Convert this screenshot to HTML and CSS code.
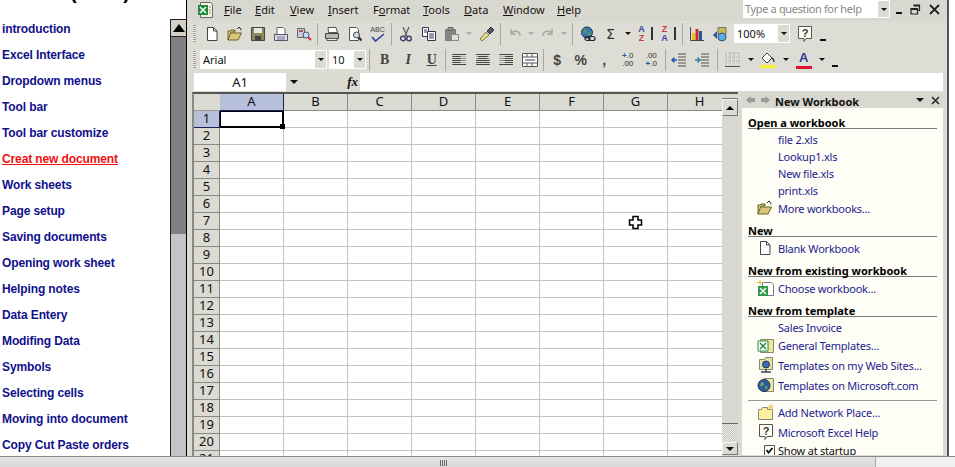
FILE: index.html
```html
<!DOCTYPE html>
<html lang="en">
<head>
    <meta charset="UTF-8">
    <title>Excel lessons</title>
    <link rel="stylesheet" href="styles.css">
</head>
<body>

<svg class="sprites" width="0" height="0">
    <symbol id="i-new" viewBox="0 0 16 16"><path d="M3.5 1.5h6l3.5 3.5v9.500h-9.500z" fill="#fff" stroke="#444"/><path d="M9.500 1.500v3.500h3.500" fill="none" stroke="#444"/></symbol>
    <symbol id="i-open" viewBox="0 0 16 16"><path d="M1 14V5h2l1-1h4v2H4L1 14h10l3.500-7H4" fill="#d8c878" stroke="#6b6428"/><path d="M10 3l2-2 2 2M12 1.500c1.500.5 2 1.500 2 3" fill="none" stroke="#333"/></symbol>
    <symbol id="i-save" viewBox="0 0 16 16"><path d="M1.500 1.500h13v13h-13z" fill="#8a8a58" stroke="#444"/><path d="M4 2h8v5H4z" fill="#e8e8e0"/><path d="M5 10h6v4.500H5z" fill="#444"/></symbol>
    <symbol id="i-perm" viewBox="0 0 16 16"><path d="M4 1.500h6l2 2v5H4z" fill="#fff" stroke="#667"/><path d="M1.500 8.500h13v6h-13z" fill="#dde" stroke="#556"/><path d="M4 11h8M4 13h8" stroke="#778"/></symbol>
    <symbol id="i-search" viewBox="0 0 16 16"><path d="M1.500 2.500h7v9h-7z" fill="#ccd" stroke="#666"/><path d="M3 4h4v2H3z" fill="#a55"/><circle cx="10" cy="9" r="3" fill="#bdf" stroke="#555"/><path d="M12 11l3 3" stroke="#c33" stroke-width="2"/></symbol>
    <symbol id="i-print" viewBox="0 0 16 16"><path d="M4 1.500h8l1.500 5h-9z" fill="#fff" stroke="#555"/><path d="M1.500 7.500h13v5h-13z" fill="#b8b8b0" stroke="#444"/><path d="M3 12.500h10v2H3z" fill="#eee" stroke="#555"/></symbol>
    <symbol id="i-preview" viewBox="0 0 16 16"><path d="M2.500 1.500h7l2 2v11h-9z" fill="#fff" stroke="#555"/><circle cx="9.500" cy="9" r="3" fill="#cde" stroke="#444"/><path d="M11.500 11l3 3.500" stroke="#333" stroke-width="2"/></symbol>
    <symbol id="i-copy" viewBox="0 0 16 16"><path d="M1.500 1.500h6v9h-6z" fill="#fff" stroke="#335"/><path d="M6.500 5.500h8v9h-8z" fill="#fff" stroke="#335"/><path d="M8 8h5M8 10h5M8 12h5M3 4h3M3 6h3" stroke="#335"/></symbol>
    <symbol id="i-cut" viewBox="0 0 16 16"><path d="M5 1l4 9M11 1L7 10" stroke="#555" stroke-width="1.200" fill="none"/><circle cx="5" cy="12.500" r="2.300" fill="none" stroke="#336" stroke-width="1.300"/><circle cx="11" cy="12.500" r="2.300" fill="none" stroke="#336" stroke-width="1.300"/></symbol>
    <symbol id="i-paste" viewBox="0 0 16 16"><path d="M1.500 3.500h10v11h-10z" fill="#888880" stroke="#777"/><path d="M4 1.500h5v3H4z" fill="#999" stroke="#666"/><path d="M7.500 8.500h7v6h-7z" fill="#ddd" stroke="#888"/></symbol>
    <symbol id="i-painter" viewBox="0 0 16 16"><path d="M1 13l6-7 3 3-7 6z" fill="#f0e070" stroke="#776"/><path d="M8 5l4-4 3 3-4 4z" fill="#556" stroke="#334"/></symbol>
    <symbol id="i-undo" viewBox="0 0 16 16"><path d="M4 3v5h5M4 8c2-4 9-4 9 2" fill="none" stroke="#a8a8a0" stroke-width="1.500"/></symbol>
    <symbol id="i-redo" viewBox="0 0 16 16"><path d="M12 3v5H7M12 8c-2-4-9-4-9 2" fill="none" stroke="#a8a8a0" stroke-width="1.500"/></symbol>
    <symbol id="i-link" viewBox="0 0 16 16"><circle cx="7" cy="6.500" r="5.500" fill="#3c78b8" stroke="#235"/><path d="M4 3l3 1-1 3-3 0zM8 6l3 1-1 3-2-1z" fill="#5a9a50"/><rect x="5" y="10.500" width="5" height="4" rx="2" fill="none" stroke="#223" stroke-width="1.200"/><rect x="9" y="10.500" width="6" height="4" rx="2" fill="none" stroke="#223" stroke-width="1.200"/></symbol>
    <symbol id="i-chart" viewBox="0 0 16 16"><path d="M1.500 1v13.500H15" fill="none" stroke="#444"/><path d="M3 7h3v7H3z" fill="#e8c020"/><path d="M6.500 3h3v11h-3z" fill="#c03030"/><path d="M10 5h3v9h-3z" fill="#3050a0"/></symbol>
    <symbol id="i-draw" viewBox="0 0 16 16"><path d="M6 1.500h8v7H6z" fill="#c8b850" stroke="#776"/><path d="M1 9l4-4v8z" fill="#3050a0"/><circle cx="10" cy="11" r="4" fill="#5ab0e0" stroke="#357"/></symbol>
    <symbol id="i-help" viewBox="0 0 18 18"><path d="M2.500 1.500h13v12H10l-2 3v-3H2.500z" fill="#fdfdee" stroke="#555"/><text x="9" y="11.500" font-family="Liberation Sans" font-size="11" font-weight="bold" text-anchor="middle" fill="#335">?</text></symbol>
    <symbol id="i-xl" viewBox="0 0 18 18"><path d="M3.500 1.500h10l2 2v13h-12z" fill="#f4f4e0" stroke="#667"/><path d="M1 4h10v10H1z" fill="#1f8a3c"/><path d="M3 6l6 6M9 6l-6 6" stroke="#fff" stroke-width="1.500"/><path d="M12 6h2M12 9h2M12 12h2" stroke="#6a9a6a"/></symbol>
    <symbol id="i-tpl" viewBox="0 0 18 18"><path d="M3.500 2.500h13v13h-13z" fill="#eee8a0" stroke="#887"/><path d="M1 4h10v10H1z" fill="#fff" stroke="#1f8a3c"/><path d="M3 6l6 6M9 6l-6 6" stroke="#1f8a3c" stroke-width="1.500"/></symbol>
    <symbol id="i-web" viewBox="0 0 18 18"><path d="M2.500 3.500h5l1-2h7v12h-13z" fill="#e8e4a8" stroke="#887"/><circle cx="9" cy="8.500" r="3.500" fill="#3c68b0" stroke="#235"/><path d="M4 16h10M9 13v3" stroke="#445" stroke-width="1.500"/></symbol>
    <symbol id="i-globe" viewBox="0 0 18 18"><path d="M7 2.500h9.500v13H7z" fill="#eee8a0" stroke="#887"/><circle cx="7" cy="9.500" r="6" fill="#2f5c9c" stroke="#234"/><path d="M4 6l3 1-1 3H3zM8 10l3 1-2 3z" fill="#68a858"/></symbol>
    <symbol id="i-place" viewBox="0 0 18 18"><path d="M1.500 6.500h3l1-2h5v2h5v10h-14z" fill="#fbf0a0" stroke="#887"/><path d="M14 1v6M11 4h6M12 2l4 4M16 2l-4 4" stroke="#e0d060"/></symbol>
    <symbol id="i-choose" viewBox="0 0 18 18"><path d="M5.500 2.500h9l2 2v11h-11z" fill="#fff" stroke="#778"/><path d="M1 6h10v10H1z" fill="#2a9a48"/><path d="M3 8l6 6M9 8l-6 6" stroke="#fff" stroke-width="1.500"/><path d="M3 0v5M0 2.500h6" stroke="#c8c050"/></symbol>
    <symbol id="i-outdent" viewBox="0 0 16 16"><path d="M7 2h8M7 5h8M7 8h8M7 11h8M7 14h8" stroke="#555"/><path d="M1 8h5M3.500 5.500L1 8l2.500 2.500" fill="none" stroke="#2050b0" stroke-width="1.400"/></symbol>
    <symbol id="i-indent" viewBox="0 0 16 16"><path d="M7 2h8M7 5h8M7 8h8M7 11h8M7 14h8" stroke="#555"/><path d="M1 8h5M3.500 5.500L6 8l-2.500 2.500" fill="none" stroke="#2a80a0" stroke-width="1.400"/></symbol>
</svg>

<div class="page">
    <div class="main">
        <nav class="nav">
            <div class="nav-title">(2002)</div>
            <a class="nav-link">introduction</a>
            <a class="nav-link">Excel Interface</a>
            <a class="nav-link">Dropdown menus</a>
            <a class="nav-link">Tool bar</a>
            <a class="nav-link">Tool bar customize</a>
            <a class="nav-link nav-current">Creat new document</a>
            <a class="nav-link">Work sheets</a>
            <a class="nav-link">Page setup</a>
            <a class="nav-link">Saving documents</a>
            <a class="nav-link">Opening work sheet</a>
            <a class="nav-link">Helping notes</a>
            <a class="nav-link">Data Entery</a>
            <a class="nav-link">Modifing Data</a>
            <a class="nav-link">Symbols</a>
            <a class="nav-link">Selecting cells</a>
            <a class="nav-link">Moving into document</a>
            <a class="nav-link">Copy Cut Paste orders</a>
        </nav>
        <div class="nav-scroll">
            <div class="nav-scroll-up"><span class="tri-up"></span></div>
            <div class="nav-scroll-thumb"></div>
            <div class="nav-scroll-track"></div>
        </div>

        <div class="excel">
            <div class="menubar">
                <svg class="menu-logo" width="18" height="18"><use href="#i-xl"/></svg>
                <div class="menu-items">
                    <span><u>F</u>ile</span>
                    <span><u>E</u>dit</span>
                    <span><u>V</u>iew</span>
                    <span><u>I</u>nsert</span>
                    <span>F<u>o</u>rmat</span>
                    <span><u>T</u>ools</span>
                    <span><u>D</u>ata</span>
                    <span><u>W</u>indow</span>
                    <span><u>H</u>elp</span>
                </div>
                <div class="ask">
                    <span class="ask-text">Type a question for help</span>
                    <span class="ask-arrow"><i class="tri-down"></i></span>
                </div>
                <div class="win-btns">
                    <span class="win-min"></span>
                    <svg width="11" height="11" viewBox="0 0 11 11"><path d="M3.500 1h6v5.500h-2M3.500 2h6M1 4.500h6.500v5.500H1zM1 5.500h6.500" fill="none" stroke="#222" stroke-width="1.200"/></svg>
                    <svg width="11" height="11" viewBox="0 0 11 11"><path d="M1 1l9 9M10 1l-9 9" stroke="#222" stroke-width="1.800"/></svg>
                </div>
            </div>

            <div class="toolbar toolbar-std">
                <span class="grip"></span>
                <span class="tb"><svg width="16" height="16"><use href="#i-new"/></svg></span>
                <span class="tb"><svg width="16" height="16"><use href="#i-open"/></svg></span>
                <span class="tb"><svg width="16" height="16"><use href="#i-save"/></svg></span>
                <span class="tb"><svg width="16" height="16"><use href="#i-perm"/></svg></span>
                <span class="tb"><svg width="16" height="16"><use href="#i-search"/></svg></span>
                <span class="sep sep-5"></span>
                <span class="tb"><svg width="16" height="16"><use href="#i-print"/></svg></span>
                <span class="tb"><svg width="16" height="16"><use href="#i-preview"/></svg></span>
                <span class="tb spell">ABC<svg width="14" height="9" viewBox="0 0 14 9"><path d="M1 4l3.500 4L13 1" fill="none" stroke="#30409a" stroke-width="1.600"/></svg></span>
                <span class="sep sep-5"></span>
                <span class="tb"><svg width="16" height="16"><use href="#i-cut"/></svg></span>
                <span class="tb"><svg width="16" height="16"><use href="#i-copy"/></svg></span>
                <span class="tb"><svg width="16" height="16"><use href="#i-paste"/></svg></span>
                <span class="tb-arrow"><i class="tri-down tri-muted"></i></span>
                <span class="tb"><svg width="16" height="16"><use href="#i-painter"/></svg></span>
                <span class="sep sep-5"></span>
                <span class="tb"><svg width="16" height="16"><use href="#i-undo"/></svg></span>
                <span class="tb-arrow tb-arrow-narrow"><i class="tri-down tri-muted"></i></span>
                <span class="tb"><svg width="16" height="16"><use href="#i-redo"/></svg></span>
                <span class="tb-arrow tb-arrow-narrow"><i class="tri-down tri-muted"></i></span>
                <span class="sep sep-7"></span>
                <span class="tb"><svg width="16" height="16"><use href="#i-link"/></svg></span>
                <span class="tb sigma">Σ</span>
                <span class="tb-arrow"><i class="tri-down"></i></span>
                <span class="tb sort"><b class="s-blue">A</b><b class="s-red">Z</b><i class="sort-arrow"></i></span>
                <span class="tb sort"><b class="s-red">Z</b><b class="s-blue">A</b><i class="sort-arrow"></i></span>
                <span class="sep sep-5"></span>
                <span class="tb"><svg width="16" height="16"><use href="#i-chart"/></svg></span>
                <span class="tb"><svg width="16" height="16"><use href="#i-draw"/></svg></span>
                <span class="combo combo-zoom"><span class="combo-text">100%</span><span class="combo-arrow"><i class="tri-down"></i></span></span>
                <span class="tb tb-help"><svg width="18" height="18"><use href="#i-help"/></svg></span>
                <span class="tb-more"></span>
            </div>

            <div class="toolbar toolbar-fmt">
                <span class="grip"></span>
                <span class="combo combo-font"><span class="combo-text">Arial</span><span class="combo-arrow"><i class="tri-down"></i></span></span>
                <span class="combo combo-size"><span class="combo-text">10</span><span class="combo-arrow"><i class="tri-down"></i></span></span>
                <span class="sep sep-7"></span>
                <span class="tb fmt"><b>B</b></span>
                <span class="tb fmt"><b><em>I</em></b></span>
                <span class="tb fmt"><b><u>U</u></b></span>
                <span class="sep"></span>
                <span class="tb"><span class="lines lines-left"></span></span>
                <span class="tb"><span class="lines lines-center"></span></span>
                <span class="tb"><span class="lines lines-right"></span></span>
                <span class="tb"><svg width="16" height="16" viewBox="0 0 16 16"><path d="M.5 1.500h15v13H.5z" fill="#fff" stroke="#555"/><path d="M.5 5h15M.5 11h15M5 1.500V5M10 1.500V5M5 11v3.500M10 11v3.500" stroke="#555"/><path d="M3 8h10" stroke="#335"/></svg></span>
                <span class="sep"></span>
                <span class="tb fmt sym">$</span>
                <span class="tb fmt sym">%</span>
                <span class="tb fmt sym">,</span>
                <span class="tb dec"><em>+</em>.0<br>.00</span>
                <span class="tb dec">.00<br><em>+</em>.0</span>
                <span class="sep"></span>
                <span class="tb"><svg width="16" height="16"><use href="#i-outdent"/></svg></span>
                <span class="tb"><svg width="16" height="16"><use href="#i-indent"/></svg></span>
                <span class="sep sep-7"></span>
                <span class="tb"><svg width="15" height="15" viewBox="0 0 15 15"><path d="M1 1h13M1 5h13M1 9h13M1 1v13M5 1v13M9 1v13M14 1v13" stroke="#aaa" stroke-dasharray="1 1" fill="none"/><path d="M0 14.500h15" stroke="#555"/></svg></span>
                <span class="tb-arrow"><i class="tri-down"></i></span>
                <span class="tb"><svg width="18" height="18" viewBox="0 0 18 18"><path d="M3 7l5-5 5 5-5 5z" fill="#fff" stroke="#444"/><path d="M13 7c2 1 2 3 2 4" stroke="#444" fill="none" stroke-width="1.500"/><path d="M1 14h16v3H1z" fill="#f6f030"/></svg></span>
                <span class="tb-arrow"><i class="tri-down"></i></span>
                <span class="tb color-a">A</span>
                <span class="tb-arrow"><i class="tri-down"></i></span>
                <span class="tb-more"></span>
            </div>

            <div class="formula">
                <div class="namebox">A1</div>
                <div class="name-arrow"><i class="tri-down"></i></div>
                <div class="fx">fx</div>
                <div class="formula-input"></div>
            </div>

            <div class="workarea">
                <div class="sheet">
                    <div class="col-heads">
                        <span class="corner"></span>
                        <span class="col-head col-active">A</span>
                        <span class="col-head">B</span>
                        <span class="col-head">C</span>
                        <span class="col-head">D</span>
                        <span class="col-head">E</span>
                        <span class="col-head">F</span>
                        <span class="col-head">G</span>
                        <span class="col-head">H</span>
                    </div>
                    <div class="sheet-body">
                        <div class="row-heads">
                            <span class="row-head row-active">1</span>
                            <span class="row-head">2</span>
                            <span class="row-head">3</span>
                            <span class="row-head">4</span>
                            <span class="row-head">5</span>
                            <span class="row-head">6</span>
                            <span class="row-head">7</span>
                            <span class="row-head">8</span>
                            <span class="row-head">9</span>
                            <span class="row-head">10</span>
                            <span class="row-head">11</span>
                            <span class="row-head">12</span>
                            <span class="row-head">13</span>
                            <span class="row-head">14</span>
                            <span class="row-head">15</span>
                            <span class="row-head">16</span>
                            <span class="row-head">17</span>
                            <span class="row-head">18</span>
                            <span class="row-head">19</span>
                            <span class="row-head">20</span>
                            <span class="row-head">21</span>
                        </div>
                        <div class="cells">
                            <div class="cell-selected"><span class="cell-handle"></span></div>
                            <svg class="cross-cursor" width="15" height="15" viewBox="0 0 15 15"><path d="M5 1.500h5V5h3.500v5H10v3.500H5V10H1.500V5H5z" fill="#fff" stroke="#000" stroke-width="1.500"/></svg>
                        </div>
                    </div>
                </div>

                <div class="vscroll">
                    <div class="split-box"></div>
                    <div class="vs-btn"><span class="tri-up tri-small"></span></div>
                    <div class="vs-thumb"></div>
                    <div class="vs-track"></div>
                    <div class="vs-btn vs-down"><i class="tri-down tri-big"></i></div>
                </div>

                <aside class="pane">
                    <div class="pane-head">
                        <span class="pane-arrow pane-back"></span>
                        <span class="pane-arrow pane-fwd"></span>
                        <span class="pane-title">New Workbook</span>
                        <i class="tri-down tri-big"></i>
                        <svg width="9" height="9" viewBox="0 0 9 9"><path d="M1 1l7 7M8 1L1 8" stroke="#222" stroke-width="1.500"/></svg>
                    </div>
                    <div class="pane-body">
                        <h4 class="pane-h">Open a workbook</h4>
                        <a class="item item-s">file 2.xls</a>
                        <a class="item item-s">Lookup1.xls</a>
                        <a class="item item-s">New file.xls</a>
                        <a class="item item-s">print.xls</a>
                        <a class="item item-m"><svg width="16" height="16"><use href="#i-open"/></svg>More workbooks...</a>

                        <h4 class="pane-h">New</h4>
                        <a class="item item-m"><svg width="16" height="16"><use href="#i-new"/></svg>Blank Workbook</a>

                        <h4 class="pane-h">New from existing workbook</h4>
                        <a class="item item-m"><svg width="18" height="18"><use href="#i-choose"/></svg>Choose workbook...</a>

                        <h4 class="pane-h">New from template</h4>
                        <a class="item item-s">Sales Invoice</a>
                        <a class="item item-g"><svg width="18" height="18"><use href="#i-tpl"/></svg>General Templates...</a>
                        <a class="item item-l"><svg width="18" height="18"><use href="#i-web"/></svg>Templates on my Web Sites...</a>
                        <a class="item item-l"><svg width="18" height="18"><use href="#i-globe"/></svg>Templates on Microsoft.com</a>

                        <div class="pane-rule"></div>
                        <a class="item item-l"><svg width="18" height="18"><use href="#i-place"/></svg>Add Network Place...</a>
                        <a class="item item-l"><svg width="18" height="18"><use href="#i-help"/></svg>Microsoft Excel Help</a>
                        <div class="startup"><svg class="check" width="11" height="11" viewBox="0 0 11 11"><path d="M.5.500h10v10H.5z" fill="#fff" stroke="#555"/><path d="M2.500 5l2 2.500 4-4.500" fill="none" stroke="#111" stroke-width="1.800"/></svg>Show at startup</div>
                    </div>
                </aside>
            </div>
        </div>
        <div class="outside"></div>
    </div>
    <div class="frame-bar">
        <div class="frame-left"><span class="frame-grip"></span></div>
        <div class="frame-right"></div>
    </div>
</div>

</body>
</html>
```

FILE: styles.css
```css
html, body {
    margin: 0;
    padding: 0;
    background: #fff;
}
.sprites {
    position: absolute;
}
.page {
    width: 955px;
    height: 467px;
    display: flex;
    flex-direction: column;
    overflow: hidden;
}
.main {
    height: 456px;
    display: flex;
    overflow: hidden;
}

/* left frame */
.nav {
    width: 170px;
    flex: none;
    overflow: hidden;
    font-family: "Liberation Sans", Arial, sans-serif;
    font-size: 12px;
    font-weight: bold;
}
.nav-title {
    height: 16px;
    margin-top: -16px;
    margin-bottom: 16px;
    padding-left: 70px;
    font-size: 20px;
    line-height: 16px;
    letter-spacing: 0.4px;
    color: #000;
}
.nav-link {
    display: block;
    height: 26px;
    line-height: 26px;
    padding-left: 2px;
    color: #10108c;
    letter-spacing: -0.12px;
    white-space: nowrap;
}
.nav-current {
    color: #f01010;
    text-decoration: underline;
}
.nav-scroll {
    width: 17px;
    flex: none;
    box-sizing: border-box;
    padding-top: 19px;
    border-right: 1px solid #000;
    display: flex;
    flex-direction: column;
}
.nav-scroll-up {
    height: 16px;
    background: #d4d0c8;
    border: 1px solid #222;
    border-right: 0;
    display: flex;
    align-items: center;
    justify-content: center;
}
.nav-scroll-thumb {
    height: 197px;
    background: #808080;
    border-left: 1px solid #222;
}
.nav-scroll-track {
    flex: 1;
    background: #c4c4c4;
    border-left: 1px solid #222;
}
.tri-up {
    width: 0;
    height: 0;
    border-left: 6px solid transparent;
    border-right: 6px solid transparent;
    border-bottom: 8px solid #000;
}
.tri-small {
    border-left-width: 4px;
    border-right-width: 4px;
    border-bottom-width: 4px;
}
.tri-down {
    display: inline-block;
    width: 0;
    height: 0;
    border-left: 3px solid transparent;
    border-right: 3px solid transparent;
    border-top: 3px solid #111;
}
.tri-big {
    border-left-width: 4px;
    border-right-width: 4px;
    border-top-width: 4px;
}
.tri-muted {
    border-top-color: #aaa;
}

/* excel window */
.excel {
    width: 760px;
    flex: none;
    background: #dbdad3;
    border-right: 2px solid #55554f;
    font-family: "Noto Sans", sans-serif;
    font-size: 11px;
    color: #111;
    display: flex;
    flex-direction: column;
}
.outside {
    flex: 1;
    background: #fff;
}
.menubar {
    height: 21px;
    flex: none;
    display: flex;
    align-items: center;
    background: #d9d8d0;
}
.menu-logo {
    margin-left: 10px;
    margin-right: 9px;
    margin-top: -2px;
}
.menu-items {
    display: flex;
    width: 519px;
    margin-top: -2px;
}
.menu-items span:nth-child(1) { width: 31px; }
.menu-items span:nth-child(2) { width: 35px; }
.menu-items span:nth-child(3) { width: 38px; }
.menu-items span:nth-child(4) { width: 45px; }
.menu-items span:nth-child(5) { width: 50px; }
.menu-items span:nth-child(6) { width: 41px; }
.menu-items span:nth-child(7) { width: 39px; }
.menu-items span:nth-child(8) { width: 54px; }
.ask {
    width: 147px;
    height: 18px;
    margin-top: -3px;
    display: flex;
    background: #fff;
}
.ask-text {
    flex: 1;
    padding-left: 2px;
    line-height: 17px;
    letter-spacing: -0.35px;
    color: #888;
    white-space: nowrap;
}
.ask-arrow {
    width: 11px;
    background: #dbdad3;
    border: 1px solid #fff;
    display: flex;
    align-items: center;
    justify-content: center;
}
.win-btns {
    display: flex;
    align-items: center;
    gap: 8px;
    margin-left: 6px;
    margin-top: -3px;
}
.win-min {
    width: 6px;
    height: 2px;
    margin-top: 8px;
    background: #111;
}
.toolbar {
    height: 25px;
    flex: none;
    display: flex;
    align-items: center;
    padding-left: 6px;
    background: #dddcd5;
}
.toolbar-std {
    height: 26px;
    padding-bottom: 1px;
    box-sizing: border-box;
}
.toolbar-fmt .tb {
    width: 23.5px;
}
.grip {
    width: 3px;
    height: 17px;
    margin-right: 4px;
    background: repeating-linear-gradient(to bottom, #9a9a94 0 1px, #f0f0ea 1px 2px);
}
.tb {
    width: 23px;
    height: 22px;
    flex: none;
    display: flex;
    align-items: center;
    justify-content: center;
}
.tb-arrow {
    width: 12px;
    height: 22px;
    flex: none;
    display: flex;
    align-items: center;
    justify-content: center;
}
.tb-arrow-narrow {
    width: 10px;
}
.tb-help {
    margin-left: 3px;
}
.tb-more {
    width: 6px;
    height: 2px;
    margin: 12px 0 0 4px;
    background: #111;
}
.sep {
    width: 4px;
    height: 22px;
    flex: none;
    background: linear-gradient(#a8a8a2, #a8a8a2) center / 1px 100% no-repeat;
}
.sep-5 { width: 5px; }
.sep-7 { width: 7px; }
.spell {
    flex-direction: column;
    font-family: "Liberation Sans", sans-serif;
    font-size: 7px;
    line-height: 7px;
    color: #444;
}
.sigma {
    font-family: "DejaVu Sans", sans-serif;
    font-size: 14px;
    color: #333;
}
.sort {
    position: relative;
    flex-direction: column;
    font-family: "Liberation Sans", sans-serif;
    font-size: 9px;
    line-height: 9px;
    padding-right: 8px;
    box-sizing: border-box;
}
.s-blue { color: #3848a8; }
.s-red { color: #c84040; }
.sort-arrow {
    position: absolute;
    right: 4px;
    top: 4px;
    width: 2px;
    height: 13px;
    background: #333;
}
.combo {
    height: 19px;
    display: flex;
    flex: none;
    background: #fff;
    box-sizing: border-box;
}
.combo-text {
    flex: 1;
    padding-left: 3px;
    line-height: 19px;
}
.combo-arrow {
    width: 11px;
    background: #dbdad3;
    border: 1px solid #fff;
    display: flex;
    align-items: center;
    justify-content: center;
}
.combo-font {
    width: 127px;
}
.combo-size {
    width: 37px;
    margin-left: 2px;
}
.combo-zoom {
    width: 56px;
    margin-left: 3px;
}
.fmt {
    font-family: "Liberation Serif", serif;
    font-size: 14px;
    color: #444;
}
.sym {
    font-family: "Liberation Sans", sans-serif;
    font-weight: bold;
    font-size: 14px;
}
.dec {
    display: block;
    font-family: "Liberation Sans", sans-serif;
    font-size: 8px;
    line-height: 8px;
    padding-top: 3px;
    box-sizing: border-box;
    text-align: center;
    color: #333;
}
.dec em {
    font-style: normal;
    color: #2050b0;
    font-weight: bold;
}
.lines {
    width: 14px;
    height: 11px;
    background: repeating-linear-gradient(to bottom, #444 0 1px, transparent 1px 2px);
}
.lines-left { clip-path: polygon(0 0, 100% 0, 100% 20%, 60% 20%, 60% 40%, 100% 40%, 100% 60%, 60% 60%, 60% 80%, 100% 80%, 100% 100%, 0 100%); }
.lines-center { clip-path: polygon(0 0, 100% 0, 100% 20%, 85% 20%, 85% 40%, 100% 40%, 100% 100%, 0 100%, 0 40%, 15% 40%, 15% 20%, 0 20%); }
.lines-right { clip-path: polygon(0 0, 100% 0, 100% 100%, 0 100%, 0 80%, 40% 80%, 40% 60%, 0 60%, 0 40%, 40% 40%, 40% 20%, 0 20%); }
.color-a {
    font-family: "Liberation Sans", sans-serif;
    font-size: 13px;
    font-weight: bold;
    color: #303c98;
    line-height: 12px;
    background: linear-gradient(#d8142a, #d8142a) center 17px / 16px 3px no-repeat;
    padding-bottom: 3px;
    box-sizing: border-box;
}
.formula {
    height: 18px;
    flex: none;
    margin: 1px 4px 0 7px;
    display: flex;
    align-items: stretch;
    font-size: 13px;
}
.namebox {
    width: 92px;
    background: #fff;
    text-align: center;
    line-height: 18px;
}
.name-arrow {
    width: 16px;
    display: flex;
    align-items: center;
    justify-content: center;
}
.name-arrow .tri-down {
    border-left-width: 4px;
    border-right-width: 4px;
    border-top-width: 4px;
}
.fx {
    width: 58px;
    text-align: right;
    padding-right: 2px;
    box-sizing: border-box;
    font-family: "Liberation Serif", serif;
    font-style: italic;
    font-weight: bold;
    line-height: 18px;
}
.formula-input {
    flex: 1;
    background: #fff;
}
.workarea {
    flex: 1;
    min-height: 0;
    display: flex;
    padding: 1px 0 0 5px;
    overflow: hidden;
}
.sheet {
    width: 530px;
    flex: none;
    box-sizing: border-box;
    border-top: 2px solid #55554f;
    border-left: 2px solid #8a8a84;
    overflow: hidden;
}
.col-heads {
    display: flex;
    height: 17px;
}
.corner {
    width: 26px;
    flex: none;
    background: #dbdad3;
    border-bottom: 1px solid #9a9a94;
    box-sizing: border-box;
}
.col-head {
    width: 64px;
    flex: none;
    box-sizing: border-box;
    background: #dbdad3;
    border-right: 1px solid #8a8a84;
    border-bottom: 1px solid #8a8a84;
    text-align: center;
    font-size: 13px;
    line-height: 15px;
}
.col-active {
    background: #b6c0da;
    border-right-color: #16205a;
    border-bottom-color: #16205a;
}
.sheet-body {
    display: flex;
}
.row-heads {
    width: 26px;
    flex: none;
}
.row-head {
    display: block;
    height: 17px;
    box-sizing: border-box;
    background: #dbdad3;
    border-right: 1px solid #8a8a84;
    border-bottom: 1px solid #8a8a84;
    text-align: center;
    font-size: 13px;
    line-height: 15px;
}
.row-active {
    background: #b6c0da;
    border-right-color: #16205a;
    border-bottom-color: #16205a;
}
.cells {
    flex: 1;
    height: 357px;
    position: relative;
    background-color: #fff;
    background-image:
        linear-gradient(to right, transparent 63px, #c4c4c0 63px),
        linear-gradient(to bottom, transparent 16px, #c4c4c0 16px);
    background-size: 64px 100%, 100% 17px;
}
.cell-selected {
    position: absolute;
    left: 0;
    top: 0;
    width: 64px;
    height: 17px;
    box-sizing: border-box;
    background: #fff;
    border: 2px solid #000;
    border-left-width: 1px;
    border-top-width: 1px;
}
.cell-handle {
    position: absolute;
    right: -3px;
    bottom: -3px;
    width: 5px;
    height: 5px;
    background: #000;
}
.cross-cursor {
    position: absolute;
    left: 408px;
    top: 104px;
}
.vscroll {
    width: 16px;
    flex: none;
    display: flex;
    flex-direction: column;
}
.split-box {
    height: 4px;
    background: #dbdad3;
    border-top: 2px solid #55554f;
    border-bottom: 1px solid #777;
}
.vs-btn {
    height: 17px;
    flex: none;
    box-sizing: border-box;
    background: #dbdad3;
    border: 1px solid #f6f6f0;
    border-right-color: #777;
    border-bottom-color: #777;
    display: flex;
    align-items: center;
    justify-content: center;
}
.vs-thumb {
    height: 308px;
    flex: none;
    box-sizing: border-box;
    background: #d9d8d0;
    border-bottom: 1px solid #666;
}
.vs-track {
    height: 18px;
    flex: none;
    background: repeating-conic-gradient(#c0c0ba 0 25%, #f2f2ee 0 50%) 0 0 / 2px 2px;
}
.vs-down {
    height: 13px;
}

/* task pane */
.pane {
    width: 201px;
    margin-left: 4px;
    flex: none;
    overflow: hidden;
}
.pane-head {
    height: 16px;
    display: flex;
    align-items: center;
    background: #d9d8d0;
    font-size: 11px;
}
.pane-arrow {
    width: 9px;
    height: 8px;
    background: #9c9c96;
    margin-left: 4px;
}
.pane-back { clip-path: polygon(0 50%, 50% 0, 50% 25%, 100% 25%, 100% 75%, 50% 75%, 50% 100%); }
.pane-fwd { clip-path: polygon(100% 50%, 50% 0, 50% 25%, 0 25%, 0 75%, 50% 75%, 50% 100%); margin-left: 6px; }
.pane-title {
    flex: 1;
    margin-left: 5px;
    padding-top: 2px;
    font-weight: bold;
}
.pane-head svg {
    margin: 0 3px 0 7px;
}
.pane-body {
    height: 347px;
    padding: 7px 6px 0 6px;
    background: #fefef7;
    box-sizing: border-box;
    overflow: hidden;
}
.pane-h {
    height: 13px;
    margin: 6px 0 2px;
    border-bottom: 1px solid #777;
    box-sizing: content-box;
    font-size: 11px;
    font-weight: bold;
    line-height: 15px;
    color: #000;
    white-space: nowrap;
}
.pane-h:first-child {
    margin-top: 0;
}
.item {
    display: flex;
    align-items: center;
    padding-left: 30px;
    position: relative;
    color: #1c1c90;
    font-size: 11px;
    letter-spacing: -0.22px;
    white-space: nowrap;
}
.item svg {
    position: absolute;
    left: 9px;
    top: 1px;
}
.item-s { height: 17px; }
.item-m { height: 18px; }
.item-g { height: 19px; }
.item-l { height: 20px; }
.pane-rule {
    height: 1px;
    margin: 5px 0 1px;
    background: #999;
}
.startup {
    height: 16px;
    display: flex;
    align-items: center;
    padding-left: 16px;
    gap: 3px;
    color: #111;
    letter-spacing: -0.22px;
    white-space: nowrap;
}

/* bottom frame */
.frame-bar {
    height: 11px;
    flex: none;
    display: flex;
    border-top: 1px solid #888;
    box-sizing: border-box;
}
.frame-left {
    width: 875px;
    background: linear-gradient(#e6e6e6, #d8d8d8);
    border-right: 1px solid #aaa;
    position: relative;
}
.frame-grip {
    position: absolute;
    left: 440px;
    top: 3px;
    width: 7px;
    height: 6px;
    background: repeating-linear-gradient(to right, #666 0 1px, transparent 1px 2px);
}
.frame-right {
    flex: 1;
    background: #f0f0f0;
}
```
